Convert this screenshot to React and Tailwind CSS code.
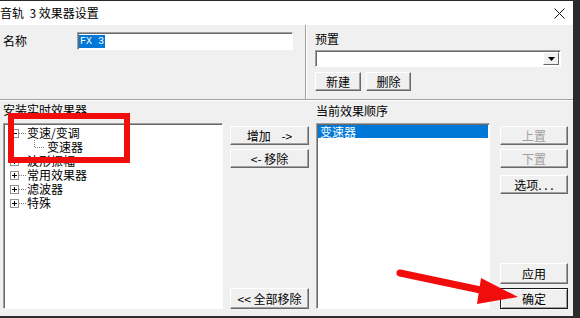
import React from 'react';

const font = { fontFamily: '"Noto Sans CJK SC", "Noto Sans", sans-serif' };

function Btn({ children, className = '', disabled, isDefault }) {
  return (
    <div
      className={`flex items-center justify-center whitespace-pre text-[12px] leading-none border ${
        isDefault
          ? 'border-[#1a1a1a] shadow-[inset_1px_1px_0_#ffffff,inset_-1px_-1px_0_#a0a0a0]'
          : 'border-t-white border-l-white border-r-[#696969] border-b-[#696969] shadow-[inset_-1px_-1px_0_#a0a0a0]'
      } ${disabled ? 'text-[#a0a0a0]' : 'text-black'} ${className}`}
    >
      {children}
    </div>
  );
}

function ExpandBox({ open }) {
  return (
    <svg width="16" height="9" viewBox="0 0 16 9" className="shrink-0">
      <rect x="0.5" y="0.5" width="8" height="8" fill="#fff" stroke="#919191" />
      <line x1="2" y1="4.5" x2="7" y2="4.5" stroke="#000" />
      {!open && <line x1="4.5" y1="2" x2="4.5" y2="7" stroke="#000" />}
      <line x1="9" y1="4.5" x2="16" y2="4.5" stroke="#808080" strokeDasharray="1 1" />
    </svg>
  );
}

function TreeRow({ open, label }) {
  return (
    <div className="flex items-center h-[14px] pl-[6px]">
      <ExpandBox open={open} />
      <span className="ml-px text-[12px] leading-none">{label}</span>
    </div>
  );
}

export default function App() {
  return (
    <div style={font} className="w-[580px] h-[318px] bg-[#2b2b2b] pt-px overflow-hidden relative">
      <div className="w-[573px] h-[315px] bg-[#f0f0f0] flex flex-col text-black">
        {/* title bar */}
        <div className="h-[24px] bg-white flex items-center justify-between pr-[8px]">
          <span className="text-[12px] leading-none whitespace-pre">音轨  3 效果器设置</span>
          <svg width="11" height="11" viewBox="0 0 11 11">
            <path d="M0.5 0.5 L10.5 10.5 M10.5 0.5 L0.5 10.5" stroke="#111" strokeWidth="1" />
          </svg>
        </div>

        {/* top section */}
        <div className="h-[75px] flex border-b border-[#a0a0a0] shadow-[0_1px_0_#ffffff]">
          <div className="w-[306px] border-r border-[#a0a0a0] shadow-[1px_0_0_#ffffff] flex items-start pt-[7px] pl-[3px]">
            <div className="w-[74px] h-[18px] flex items-center text-[12px] leading-none">名称</div>
            <div className="w-[216px] h-[18px] bg-white border border-t-[#a0a0a0] border-l-[#a0a0a0] border-r-white border-b-white shadow-[inset_1px_1px_0_#696969] flex items-center pl-px">
              <span className="bg-[#0078d7] text-white text-[10px] leading-[13px] px-px" style={{ fontFamily: '"Liberation Mono", monospace' }}>
                FX 3
              </span>
            </div>
          </div>
          <div className="flex-1 pl-[9px] pt-[7px] flex flex-col">
            <div className="h-[14px] text-[12px] leading-[14px]">预置</div>
            <div className="mt-[4px] w-[246px] h-[17px] bg-white border border-t-[#a0a0a0] border-l-[#a0a0a0] border-r-white border-b-white shadow-[inset_1px_1px_0_#696969] flex justify-end p-px">
              <div className="w-[16px] h-full bg-[#f0f0f0] border border-t-white border-l-white border-r-[#696969] border-b-[#696969] flex items-center justify-center">
                <svg width="7" height="4" viewBox="0 0 7 4">
                  <path d="M0 0 H7 L3.5 4 Z" fill="#000" />
                </svg>
              </div>
            </div>
            <div className="mt-[5px] flex gap-[5px]">
              <Btn className="w-[46px] h-[19px]">新建</Btn>
              <Btn className="w-[45px] h-[19px]">删除</Btn>
            </div>
          </div>
        </div>

        {/* bottom section */}
        <div className="flex-1 flex pl-[3px] pt-[3px]">
          <div className="w-[220px] flex flex-col">
            <div className="h-[14px] text-[12px] leading-[14px]">安装实时效果器</div>
            <div className="mt-[6px] h-[186px] bg-white border border-t-[#a0a0a0] border-l-[#a0a0a0] border-r-white border-b-white shadow-[inset_1px_1px_0_#696969] pt-[2px]">
              <TreeRow open label="变速/变调" />
              <div className="flex items-center h-[14px] pl-[29px]">
                <svg width="12" height="14" viewBox="0 0 12 14" className="shrink-0">
                  <line x1="1.5" y1="0" x2="1.5" y2="7" stroke="#808080" strokeDasharray="1 1" />
                  <line x1="2" y1="7.5" x2="12" y2="7.5" stroke="#808080" strokeDasharray="1 1" />
                </svg>
                <span className="ml-[2px] text-[12px] leading-none">变速器</span>
              </div>
              <TreeRow label="波形振幅" />
              <TreeRow label="常用效果器" />
              <TreeRow label="滤波器" />
              <TreeRow label="特殊" />
            </div>
          </div>

          <div className="ml-[7px] w-[79px] h-[206px] flex flex-col pt-[23px]">
            <Btn className="h-[19px]">增加    -&gt;</Btn>
            <Btn className="mt-[4px] h-[19px]">&lt;- 移除</Btn>
            <Btn className="mt-auto h-[21px]">&lt;&lt; 全部移除</Btn>
          </div>

          <div className="ml-[7px] w-[174px] flex flex-col">
            <div className="h-[14px] text-[12px] leading-[16px]">当前效果顺序</div>
            <div className="mt-[6px] h-[186px] bg-white border border-t-[#a0a0a0] border-l-[#a0a0a0] border-r-white border-b-white shadow-[inset_1px_1px_0_#696969] p-px">
              <div className="h-[13px] bg-[#0078d7] text-white text-[12px] leading-[13px] pl-[2px]">变速器</div>
            </div>
          </div>

          <div className="ml-[10px] w-[68px] h-[206px] flex flex-col pt-[23px]">
            <Btn disabled className="h-[19px]">上置</Btn>
            <Btn disabled className="mt-[4px] h-[19px]">下置</Btn>
            <Btn className="mt-[7px] h-[19px]">选项. . .</Btn>
            <Btn className="mt-auto h-[21px]">应用</Btn>
            <Btn isDefault className="mt-[4px] h-[21px]">确定</Btn>
          </div>
        </div>
      </div>

      {/* red annotations */}
      <div className="absolute left-[8px] top-[113px] w-[122px] h-[50px] border-[6px] border-[#f20d0d]" />
      <svg className="absolute left-0 top-0" width="580" height="318" viewBox="0 0 580 318">
        <line x1="400" y1="273" x2="490" y2="292" stroke="#f20d0d" strokeWidth="7" strokeLinecap="round" />
        <polygon points="481,278 477,304 518,297" fill="#f20d0d" />
      </svg>
    </div>
  );
}
